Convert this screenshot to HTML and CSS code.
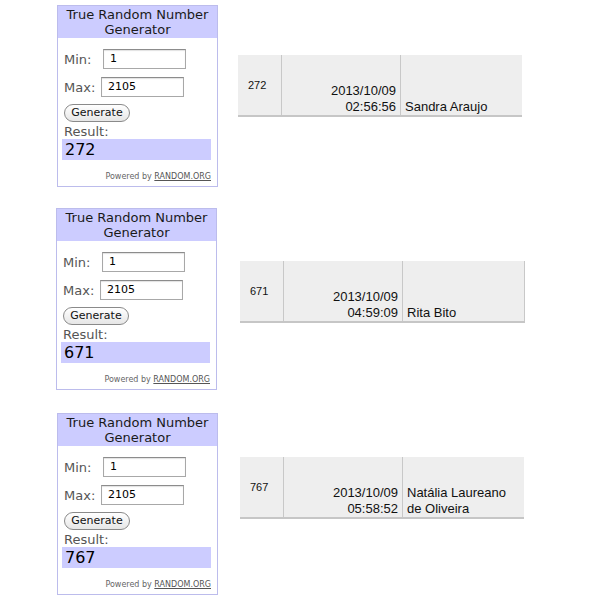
FILE: index.html
```html
<!DOCTYPE html>
<html>
<head>
<meta charset="utf-8">
<link rel="stylesheet" href="styles.css">
</head>
<body>
<div class="page">
  <div class="row row-1">
    <div class="widget">
      <div class="hdr">True Random Number<br>Generator</div>
      <div class="field field-min"><span class="lbl">Min:</span><span class="inp">1</span></div>
      <div class="field field-max"><span class="lbl">Max:</span><span class="inp">2105</span></div>
      <div class="btn">Generate</div>
      <div class="res-lbl">Result:</div>
      <div class="res">272</div>
      <div class="powered">Powered by <span class="link">RANDOM.ORG</span></div>
    </div>
    <table class="entry">
      <tr>
        <td class="c1">272</td>
        <td class="c2">2013/10/09<br>02:56:56</td>
        <td class="c3">Sandra Araujo</td>
      </tr>
    </table>
  </div>
  <div class="row row-2">
    <div class="widget">
      <div class="hdr">True Random Number<br>Generator</div>
      <div class="field field-min"><span class="lbl">Min:</span><span class="inp">1</span></div>
      <div class="field field-max"><span class="lbl">Max:</span><span class="inp">2105</span></div>
      <div class="btn">Generate</div>
      <div class="res-lbl">Result:</div>
      <div class="res">671</div>
      <div class="powered">Powered by <span class="link">RANDOM.ORG</span></div>
    </div>
    <table class="entry entry-edge">
      <tr>
        <td class="c1">671</td>
        <td class="c2">2013/10/09<br>04:59:09</td>
        <td class="c3">Rita Bito</td>
      </tr>
    </table>
  </div>
  <div class="row row-3">
    <div class="widget">
      <div class="hdr">True Random Number<br>Generator</div>
      <div class="field field-min"><span class="lbl">Min:</span><span class="inp">1</span></div>
      <div class="field field-max"><span class="lbl">Max:</span><span class="inp">2105</span></div>
      <div class="btn">Generate</div>
      <div class="res-lbl">Result:</div>
      <div class="res">767</div>
      <div class="powered">Powered by <span class="link">RANDOM.ORG</span></div>
    </div>
    <table class="entry">
      <tr>
        <td class="c1">767</td>
        <td class="c2">2013/10/09<br>05:58:52</td>
        <td class="c3">Natália Laureano de Oliveira</td>
      </tr>
    </table>
  </div>
</div>
</body>
</html>
```

FILE: styles.css
```css
html, body {
  margin: 0;
  padding: 0;
  background: #ffffff;
}

.page {
  padding-top: 5px;
  display: flex;
  flex-direction: column;
}

.row {
  display: flex;
  align-items: flex-start;
}

.row-1 { margin-left: 57px; }
.row-2 { margin-left: 56px; margin-top: 21px; }
.row-3 { margin-left: 57px; margin-top: 23px; }

.widget {
  width: 159px;
  border: 1px solid #bcbcec;
  display: flex;
  flex-direction: column;
  font-family: "DejaVu Sans", "Open Sans", sans-serif;
  padding-bottom: 3px;
  background: #fff;
}

.hdr {
  background: #ccccff;
  color: #1a1a1a;
  text-align: center;
  font-size: 13px;
  line-height: 15px;
  padding: 1px 0 1px;
}

.field {
  display: flex;
  align-items: center;
  padding-left: 6px;
}

.field-min { margin-top: 11px; }
.field-max { margin-top: 8px; }

.lbl {
  width: 39px;
  font-size: 13px;
  color: #555;
}

.field-max .lbl { width: 37px; }

.inp {
  width: 75px;
  height: 18px;
  border: 1px solid #a8a8a8;
  border-top-color: #8c8c8c;
  padding-left: 6px;
  font-size: 11px;
  line-height: 18px;
  color: #000;
  box-shadow: inset 0 1px 1px rgba(0,0,0,0.12);
}

.btn {
  align-self: flex-start;
  margin: 7px 0 0 6px;
  width: 64px;
  height: 16px;
  border: 1px solid #8a8a8a;
  border-radius: 9px;
  background: linear-gradient(#ffffff, #e6e6e6);
  font-size: 11px;
  line-height: 16px;
  text-align: center;
  color: #111;
}

.res-lbl {
  margin-top: 2px;
  padding-left: 6px;
  font-size: 13px;
  line-height: 15px;
  color: #555;
}

.res {
  margin-left: 4px;
  width: 146px;
  height: 21px;
  padding-left: 3px;
  background: #ccccff;
  font-size: 16px;
  line-height: 22px;
  color: #000;
}

.powered {
  margin-top: 11px;
  padding-right: 6px;
  text-align: right;
  font-size: 8px;
  line-height: 12px;
  color: #666;
}

.link {
  text-decoration: underline;
  color: #555;
}

.entry {
  border-collapse: collapse;
  background: #eeeeee;
  font-family: "Liberation Sans", Arial, sans-serif;
  color: #111;
  border-bottom: 2px solid #c6c6c6;
}

.row-1 .entry { margin: 50px 0 0 20px; }
.row-2 .entry { margin: 53px 0 0 23px; }
.row-3 .entry { margin: 44px 0 0 22px; }

.entry td {
  height: 60px;
  padding: 0;
}

.c1 {
  width: 33px;
  padding-left: 10px !important;
  font-size: 11px;
  vertical-align: middle;
  border-right: 1px solid #c8c8c8;
}

.c2 {
  width: 114px;
  padding-right: 4px !important;
  text-align: right;
  vertical-align: bottom;
  font-size: 13px;
  line-height: 16px;
  border-right: 1px solid #c8c8c8;
}

.c3 {
  width: 117px;
  padding-left: 4px !important;
  vertical-align: bottom;
  font-size: 13px;
  line-height: 16px;
}

.entry-edge .c3 {
  border-right: 1px solid #c8c8c8;
}
```
